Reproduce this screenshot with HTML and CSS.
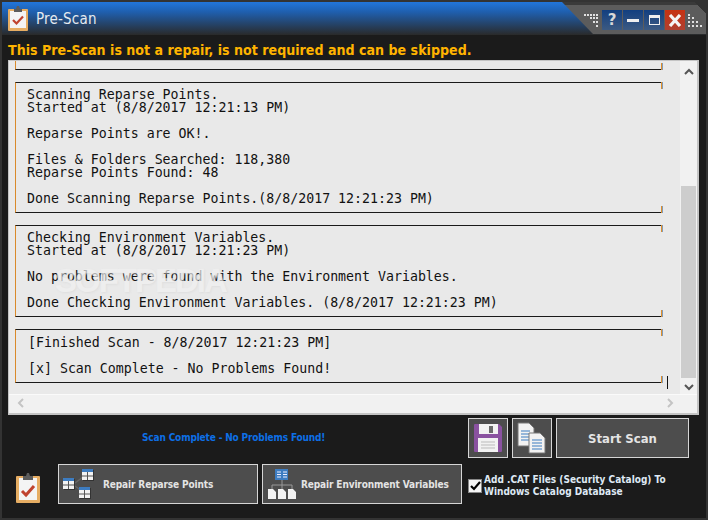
FILE: index.html
```html
<!DOCTYPE html>
<html lang="en">
<head>
<meta charset="utf-8">
<title>Pre-Scan</title>
<link rel="stylesheet" href="styles.css">
</head>
<body>
<div class="window">
  <header class="titlebar">
    <div class="title-blue">
      <svg class="app-icon" width="20" height="25" viewBox="0 0 20 25"><rect x="0" y="3" width="20" height="22" rx="1" fill="#e6ad63"/><rect x="2" y="5" width="16" height="17" fill="#f4f4f4"/><path d="M6 3h2l1-3h2l1 3h2v3H6z" fill="#5c5c5c"/><path d="M5 14l3.500 3.500 6.500-7" fill="none" stroke="#c0432f" stroke-width="2.200"/></svg>
      <span class="title-text">Pre-Scan</span>
    </div>
    <div class="title-grey">
      <svg class="dots" width="15" height="14" viewBox="0 0 15 14"><path fill="#e0e0e0" d="M0 0h2v2H0zM3 0h2v2H3zM6 0h2v2H6zM9 0h2v2H9zM12 0h2v2h-2zM6 3h2v2H6zM9 3h2v2H9zM12 3h2v2h-2zM9 7h2v2H9zM12 7h2v2h-2zM12 11h2v2h-2z"/></svg>
      <div class="controls">
        <button class="ctl ctl-blue help">?</button>
        <button class="ctl ctl-blue"><span class="min-bar"></span></button>
        <button class="ctl ctl-blue"><span class="max-box"></span></button>
        <button class="ctl ctl-red"><svg width="14" height="13" viewBox="0 0 14 13"><path d="M2 1l10 11M12 1L2 12" stroke="#f4f4f4" stroke-width="3.200" fill="none"/></svg></button>
      </div>
      <svg class="dots" width="15" height="14" viewBox="0 0 15 14"><path fill="#e0e0e0" d="M0 0h2v2H0zM0 3h2v2H0zM4 3h2v2H4zM0 7h2v2H0zM4 7h2v2H4zM8 7h2v2H8zM0 11h2v2H0zM4 11h2v2H4zM8 11h2v2H8zM12 11h2v2h-2z"/></svg>
    </div>
  </header>

  <p class="warning">This Pre-Scan is not a repair, is not required and can be skipped.</p>

  <main class="panel">
    <div class="log-area">
      <div class="log-viewport">
        <div class="log-stub"></div>
        <section class="log-box box-a">Scanning Reparse Points.
Started at (8/8/2017 12:21:13 PM)

Reparse Points are OK!.

Files &amp; Folders Searched: 118,380
Reparse Points Found: 48

Done Scanning Reparse Points.(8/8/2017 12:21:23 PM)</section>
        <section class="log-box box-b">Checking Environment Variables.
Started at (8/8/2017 12:21:23 PM)

No problems were found with the Environment Variables.

Done Checking Environment Variables. (8/8/2017 12:21:23 PM)</section>
        <section class="log-box box-c">[Finished Scan - 8/8/2017 12:21:23 PM]

[x] Scan Complete - No Problems Found!<span class="caret"></span></section>
        <div class="watermark">SOFTPEDIA</div>
      </div>
      <div class="vscroll">
        <svg class="arrow" width="10" height="7" viewBox="0 0 10 7"><path d="M1 6l4-4 4 4" fill="none" stroke="#555" stroke-width="2"/></svg>
        <div class="track"><div class="thumb"></div></div>
        <svg class="arrow" width="10" height="7" viewBox="0 0 10 7"><path d="M1 1l4 4 4-4" fill="none" stroke="#555" stroke-width="2"/></svg>
      </div>
    </div>
    <div class="hscroll">
      <svg width="7" height="10" viewBox="0 0 7 10"><path d="M6 1L2 5l4 4" fill="none" stroke="#c4c4c4" stroke-width="2"/></svg>
      <svg width="7" height="10" viewBox="0 0 7 10"><path d="M1 1l4 4-4 4" fill="none" stroke="#c4c4c4" stroke-width="2"/></svg>
    </div>
  </main>

  <footer class="footer">
    <div class="row row-top">
      <div class="status">Scan Complete - No Problems Found!</div>
      <button class="btn btn-icon">
        <svg width="28" height="28" viewBox="0 0 28 28"><path d="M0 1a1 1 0 0 1 1-1h24l3 3v24a1 1 0 0 1-1 1H1a1 1 0 0 1-1-1z" fill="#8a52a0"/><rect x="5" y="0" width="19" height="10" fill="#f2f2f2"/><rect x="15" y="2" width="4" height="7" fill="#6b6b6b"/><rect x="4" y="14" width="20" height="14" fill="#f2f2f2"/><path d="M7 18h14M7 21h14M7 24h14" stroke="#bbb"/></svg>
      </button>
      <button class="btn btn-icon">
        <svg width="30" height="32" viewBox="0 0 30 32"><path d="M1 1h11l5 5v18H1z" fill="#f2f2f2" stroke="#777"/><path d="M4 9h9M4 12h9M4 15h9M4 18h9" stroke="#3d7cc0"/><path d="M12 11h11l5 5v15H12z" fill="#f2f2f2" stroke="#777"/><path d="M15 18h10M15 21h10M15 24h10M15 27h10" stroke="#3d7cc0"/></svg>
      </button>
      <button class="btn btn-start">Start Scan</button>
    </div>
    <div class="row row-bottom">
      <svg class="clip-icon" width="24" height="30" viewBox="0 0 24 30"><rect x="0" y="3" width="24" height="27" rx="1" fill="#e6ad63"/><rect x="3" y="5" width="18" height="22" fill="#f4f4f4"/><path d="M7 3h3l1-3h2l1 3h3v4H7z" fill="#5c5c5c"/><path d="M6 18l4 4 8-9" fill="none" stroke="#c0432f" stroke-width="3"/></svg>
      <button class="btn btn-repair">
        <svg width="32" height="30" viewBox="0 0 32 30"><path d="M12 14l8-6M12 17l8 6" stroke="#666" stroke-width="1.500"/>
          <path d="M2 11h11v11H2zM21 2h11v11H21zM18 20h11v11H18z" fill="#333" transform="translate(-1 -1)"/>
          <g><rect x="0" y="9" width="11" height="11" fill="#f2f2f2"/><rect x="0" y="9" width="11" height="3" fill="#3d7cc0"/><path d="M5.500 12v8M0 16h11" stroke="#555"/></g>
          <g><rect x="19" y="0" width="11" height="11" fill="#f2f2f2"/><rect x="19" y="0" width="11" height="3" fill="#3d7cc0"/><path d="M24.500 3v8M19 7h11" stroke="#555"/></g>
          <g><rect x="16" y="18" width="11" height="11" fill="#f2f2f2"/><rect x="16" y="18" width="11" height="3" fill="#3d7cc0"/><path d="M21.500 21v8M16 25h11" stroke="#555"/></g>
        </svg>
        <span>Repair Reparse Points</span>
      </button>
      <button class="btn btn-repair btn-env">
        <svg width="29" height="32" viewBox="0 0 29 32"><path d="M14 12v5M4 21v-4h20v4M14 17v4" fill="none" stroke="#999"/><rect x="7" y="1" width="13" height="11" fill="#3d7cc0"/><path d="M9 4h4M15 4h4M9 6.500h4M15 6.500h4M9 9h4M15 9h4" stroke="#eef"/><path d="M0 21h5l3 3v7H0zM10 21h5l3 3v7h-8zM20 21h5l3 3v7h-8z" fill="#f2f2f2"/></svg>
        <span>Repair Environment Variables</span>
      </button>
      <label class="check">
        <span class="box"><svg width="11" height="10" viewBox="0 0 11 10"><path d="M1 5l3 3 6-7" fill="none" stroke="#000" stroke-width="2.200"/></svg></span>
        <span class="check-label">Add .CAT Files (Security Catalog) To<br>Windows Catalog Database</span>
      </label>
    </div>
  </footer>
</div>
</body>
</html>
```
FILE: styles.css
```css
* { box-sizing: border-box; }
html, body { margin: 0; padding: 0; }
body { width: 708px; height: 520px; overflow: hidden; font-family: "DejaVu Sans", sans-serif; }
button { font-family: inherit; cursor: default; padding: 0; }

.window {
  width: 708px; height: 520px;
  background: #1b1b1b;
  border: 2px solid #333;
  display: flex; flex-direction: column;
}

.titlebar {
  height: 33px; flex: none;
  display: flex;
  background: linear-gradient(#2276db 0, #1f5fae 10px, #2a2a2a 100%);
}
.title-blue { flex: 1; display: flex; align-items: center; padding-left: 6px; gap: 8px; }
.app-icon { margin-top: 0; }
.title-text { color: #e4eaf0; font-size: 15px; font-stretch: condensed; letter-spacing: 0.200px; padding-top: 1px; }
.title-grey {
  width: 144px; height: 32px; flex: none;
  background: linear-gradient(225deg, #333 8px, transparent 8px), linear-gradient(#3a3a3a 3px, #5c5c5c 3px);
  clip-path: polygon(0 0, 100% 0, 100% 100%, 31px 100%);
  display: flex; align-items: flex-start;
  padding: 8px 0 0 22px;
}
.controls { display: flex; gap: 1px; margin: 0 3px; }
.ctl {
  width: 20px; height: 20px; border: 0;
  display: flex; align-items: center; justify-content: center;
  color: #d8d8d8;
}
.ctl-blue { background: linear-gradient(#123f80, #3c5a82); }
.ctl-red { background: linear-gradient(#c73212, #b04030); }
.help { font-size: 15px; font-weight: 700; }
.min-bar { width: 12px; height: 3px; background: #eee; }
.max-box { width: 11px; height: 10px; border: 1px solid #eee; border-top-width: 3px; }
.dots { margin-top: 4px; flex: none; }

.warning {
  margin: 0; height: 25px; flex: none;
  padding: 7px 0 0 6px;
  color: #ffb400; font-weight: 700; font-size: 14.100px; line-height: 16px;
  font-stretch: condensed;
  white-space: nowrap;
}

.panel {
  height: 355px; flex: none;
  margin: 0 7px 0 6px;
  background: #e9e9e9;
  border: 1px solid #c4c4c4;
  border-width: 1px 2px 2px 1px;
  display: flex; flex-direction: column;
}
.log-area { flex: 1; min-height: 0; display: flex; border-bottom: 1px solid #fafafa; }
.log-viewport {
  flex: 1; position: relative; overflow: hidden;
  padding: 0 17px 0 6px;
}
.log-stub {
  height: 9px; margin-bottom: 12px;
  border-left: 1px solid #d98a2c;
  border-bottom: 1px solid #1a1a1a;
  position: relative;
}
.log-stub::after { content: ""; position: absolute; right: 0; bottom: -1px; width: 2px; height: 7px; background: linear-gradient(90deg, #e0902c 50%, #7f9ab8 50%); }
.log-box {
  position: relative;
  margin: 0 0 12px;
  padding: 5px 0 7px 11px;
  border-top: 1px solid #1a1a1a;
  border-bottom: 1px solid #1a1a1a;
  border-left: 1px solid #d98a2c;
  font-family: "DejaVu Sans Mono", monospace;
  font-size: 13.250px; line-height: 13px; color: #111;
  white-space: pre;
}
.log-box::before, .log-box::after {
  content: ""; position: absolute; right: 0; width: 2px; height: 7px; background: linear-gradient(90deg, #e0902c 50%, #7f9ab8 50%);
}
.log-box::before { top: -1px; }
.log-box::after { bottom: -1px; }
.box-c { padding-left: 12px; padding-top: 6px; }
.caret { position: absolute; right: -5px; bottom: -7px; width: 1px; height: 13px; background: #111; }
.watermark {
  position: absolute; left: 46px; top: 201px;
  font: 700 33px "Liberation Sans", sans-serif; letter-spacing: -2px;
  color: #f1f1f1; opacity: .7; text-shadow: 1px 1px 2px #dcdcdc; pointer-events: none;
}
.vscroll {
  width: 17px; flex: none; background: #f1f1f1;
  display: flex; flex-direction: column; align-items: center;
  padding: 7px 0 3px;
}
.track { flex: 1; width: 15px; display: flex; flex-direction: column; justify-content: flex-end; padding-bottom: 6px; }
.thumb { height: 192px; width: 15px; background: #cdcdcd; }
.hscroll {
  height: 18px; flex: none;
  background: #f1f1f1;
  display: flex; justify-content: space-between; align-items: center;
  padding: 0 23px 2px 8px;
}

.footer { flex: 1; display: flex; flex-direction: column; gap: 6px; padding-top: 3px; }
.row { display: flex; }
.row-top { height: 40px; padding-left: 466px; position: relative; gap: 4px; }
.status {
  position: absolute; left: 140px; top: 14px;
  color: #0d6fe6; font-size: 10px; font-weight: 700; font-stretch: condensed; letter-spacing: -0.150px; white-space: nowrap;
}
.btn {
  background: #4d4d4d; border: 1px solid #d6d6d6; color: #e4e4e4;
  font-weight: 700;
  display: flex; align-items: center;
}
.btn-icon { width: 40px; height: 40px; justify-content: center; }
.btn-start { width: 133px; height: 40px; justify-content: center; font-size: 13px; font-stretch: condensed; }
.row-bottom { height: 40px; padding-left: 14px; align-items: center; }
.clip-icon { margin: 8px 18px 0 0; }
.btn-repair { width: 200px; height: 40px; font-size: 10px; font-stretch: condensed; letter-spacing: -0.120px; padding-left: 4px; gap: 8px; margin-right: 4px; }
.btn-env { gap: 4px; padding-left: 5px; }
.check { display: flex; align-items: center; gap: 2px; margin-left: 2px; padding-top: 4px; }
.box { width: 14px; height: 14px; background: #f4f4f4; border: 1px solid #888; display: flex; align-items: center; justify-content: center; flex: none; }
.check-label { color: #dfe9f4; font-size: 10px; font-weight: 700; font-stretch: condensed; line-height: 12px; white-space: nowrap; }
```
